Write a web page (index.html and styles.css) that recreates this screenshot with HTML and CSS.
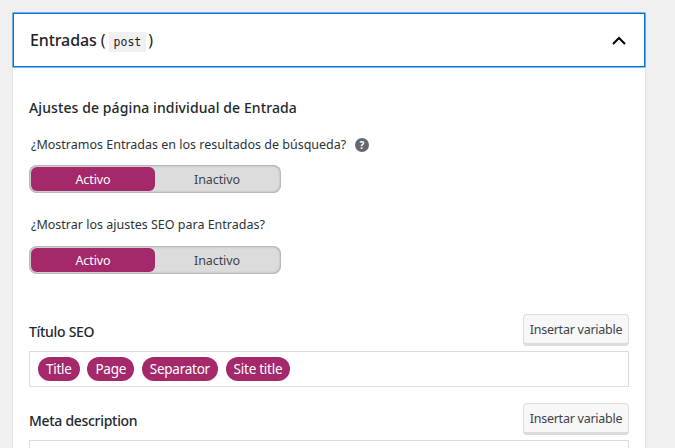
FILE: index.html
```html
<!DOCTYPE html>
<html lang="es">
<head>
<meta charset="utf-8">
<title>Entradas</title>
<link rel="stylesheet" href="styles.css">
</head>
<body>
<section class="card">
  <header class="card-head">
    <h2 class="card-title">Entradas <span class="paren">(</span> <code class="slug">post</code> <span class="paren close">)</span></h2>
    <svg class="chevron" width="14" height="9" viewBox="0 0 14 9"><path d="M1 8 L7 2 L13 8" fill="none" stroke="#000" stroke-width="2"/></svg>
  </header>
  <div class="card-body">
    <h3 class="section-title">Ajustes de página individual de Entrada</h3>
    <div class="field-label first">
      <span>¿Mostramos Entradas en los resultados de búsqueda?</span>
      <svg class="help" width="14" height="14" viewBox="0 0 14 14"><circle cx="7" cy="7" r="7" fill="#646970"/><text x="7" y="10.5" text-anchor="middle" class="help-mark">?</text></svg>
    </div>
    <div class="toggle"><span class="opt on">Activo</span><span class="opt">Inactivo</span></div>
    <div class="field-label second"><span>¿Mostrar los ajustes SEO para Entradas?</span></div>
    <div class="toggle"><span class="opt on">Activo</span><span class="opt">Inactivo</span></div>
    <div class="row title-row">
      <span class="row-label">Título SEO</span>
      <button class="insert">Insertar variable</button>
    </div>
    <div class="editor">
      <span class="pill">Title</span><span class="pill">Page</span><span class="pill">Separator</span><span class="pill">Site title</span>
    </div>
    <div class="row meta-row">
      <span class="row-label">Meta description</span>
      <button class="insert">Insertar variable</button>
    </div>
    <div class="editor"></div>
  </div>
</section>
</body>
</html>
```
FILE: styles.css
```css
html, body { margin: 0; height: 100%; overflow: hidden; }
body {
  background: #f0f0f0;
  padding: 13px 30px 0 13px;
  box-sizing: border-box;
  font-family: "Noto Sans", "Open Sans", sans-serif;
  color: #2c3338;
}
.card { background: #fff; box-shadow: 0 1px 2px rgba(0,0,0,.12); height: 600px; }
.card-head {
  height: 54px;
  box-sizing: border-box;
  border: 1px solid #0073d8;
  box-shadow: 0 0 0 0.5px #0073d8;
  display: flex;
  align-items: center;
  justify-content: space-between;
  padding: 0 18px 0 16px;
}
.card-title { margin: 0; font-size: 16px; font-weight: 500; color: #1d2327; letter-spacing: -0.1px; }
.paren { font-weight: 400; }
.close { margin-left: -2px; }
.slug {
  font-family: "DejaVu Sans Mono", monospace;
  font-size: 11.5px;
  font-weight: 400;
  background: #f0f0f1;
  margin-left: -1px;
  padding: 3px 5px;
  letter-spacing: 0;
}
.card-body { padding: 31px 16px 0; }
.section-title { margin: 0; font-size: 14px; font-weight: 500; line-height: 20px; color: #23282d; letter-spacing: 0.1px; }
.field-label {
  display: flex;
  align-items: center;
  gap: 9px;
  font-size: 12.5px;
  line-height: 18px;
  padding-left: 2px;
}
.field-label.first { margin-top: 18px; }
.field-label.second { margin-top: 23px; }
.help-mark { font: bold 10px "Noto Sans", sans-serif; fill: #fff; }
.toggle {
  display: flex;
  width: 252px;
  height: 28px;
  margin-top: 12px;
  box-sizing: border-box;
  padding: 2px;
  background: #dcdcdc;
  border-radius: 8px;
  box-shadow: inset 0 0 3px rgba(0,0,0,.45);
}
.first + .toggle { margin-top: 11px; }
.opt {
  width: 124px;
  height: 24px;
  box-sizing: border-box;
  padding-top: 1px;
  text-align: center;
  font-size: 12.5px;
  line-height: 24px;
  color: #3c434a;
  letter-spacing: -0.1px;
}
.opt.on { background: #a4286a; color: #fff; border-radius: 6px; }
.row { display: flex; justify-content: space-between; align-items: center; }
.title-row { margin-top: 40px; }
.meta-row { margin-top: 16px; }
.row-label { font-size: 14px; font-weight: 500; color: #23282d; letter-spacing: -0.3px; padding-top: 2px; }
.insert {
  width: 106px;
  height: 32px;
  box-sizing: border-box;
  padding: 0;
  font: 12.5px "Noto Sans", sans-serif;
  letter-spacing: -0.25px;
  color: #3c434a;
  background: #f7f7f7;
  border: 1px solid #dcdcde;
  border-bottom-width: 3px;
  border-radius: 4px;
}
.editor {
  height: 36px;
  margin-top: 5px;
  box-sizing: border-box;
  border: 1px solid #dcdcde;
  display: flex;
  align-items: center;
  gap: 7.7px;
  padding: 0 8px;
}
.pill {
  background: #a4286a;
  color: #fff;
  font-size: 13.5px;
  line-height: 24px;
  padding: 0 8px;
  border-radius: 12px;
  letter-spacing: -0.25px;
}
```
